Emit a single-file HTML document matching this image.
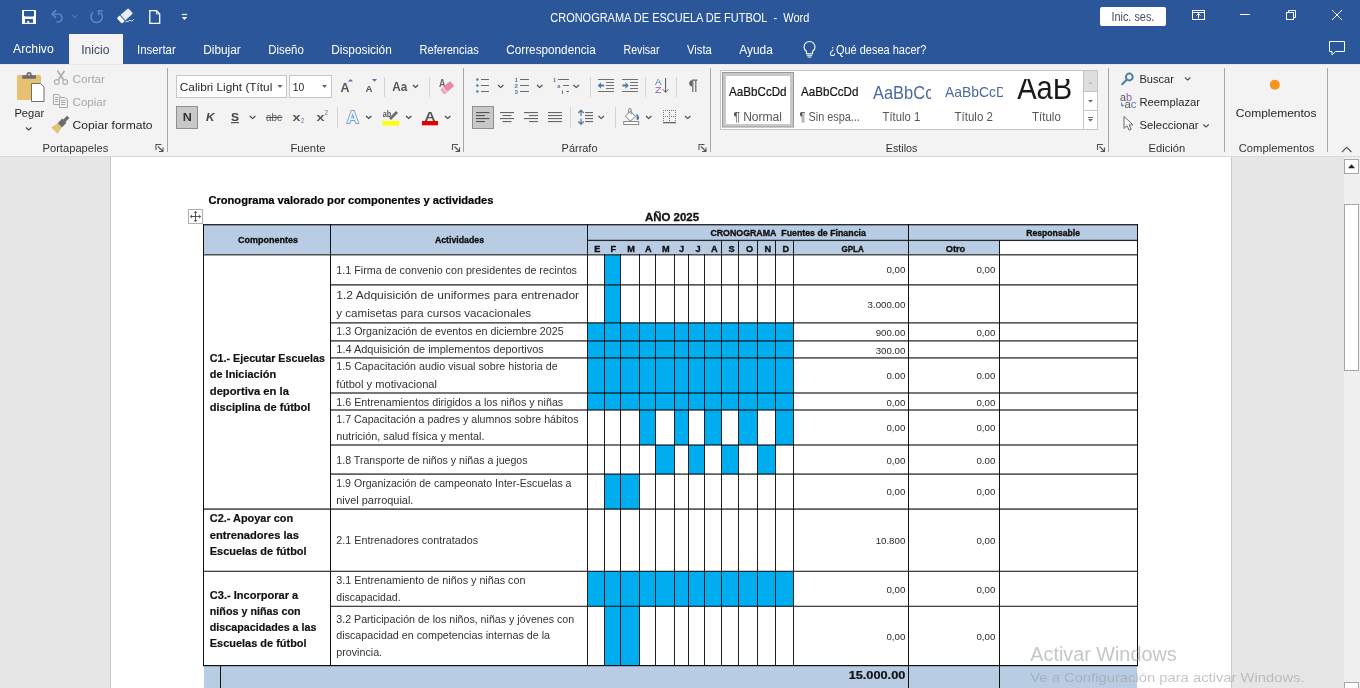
<!DOCTYPE html>
<html><head><meta charset="utf-8"><title>Word</title>
<style>html,body{margin:0;padding:0;width:1360px;height:688px;overflow:hidden;background:#e6e6e6}
svg{display:block;font-family:"Liberation Sans",sans-serif;will-change:transform}</style></head>
<body><svg width="1360" height="688" viewBox="0 0 1360 688">
<rect x="0" y="0" width="1360" height="64" fill="#2b579a" />
<rect x="69" y="34" width="54" height="30" fill="#f3f3f3" />
<rect x="0" y="64" width="1360" height="92" fill="#f3f3f3" />
<text x="550.3" y="22" font-size="12" fill="#fff" textLength="259" lengthAdjust="spacingAndGlyphs">CRONOGRAMA DE ESCUELA DE FUTBOL  -  Word</text>
<text x="13" y="53.0" font-size="12" fill="#fff" textLength="40.75" lengthAdjust="spacingAndGlyphs">Archivo</text>
<text x="137" y="54.0" font-size="12" fill="#fff" textLength="38.75" lengthAdjust="spacingAndGlyphs">Insertar</text>
<text x="203.25" y="54.0" font-size="12" fill="#fff" textLength="37.5" lengthAdjust="spacingAndGlyphs">Dibujar</text>
<text x="268.25" y="54.0" font-size="12" fill="#fff" textLength="35.5" lengthAdjust="spacingAndGlyphs">Diseño</text>
<text x="331.25" y="54.0" font-size="12" fill="#fff" textLength="60.5" lengthAdjust="spacingAndGlyphs">Disposición</text>
<text x="419.5" y="54.0" font-size="12" fill="#fff" textLength="59.25" lengthAdjust="spacingAndGlyphs">Referencias</text>
<text x="506.25" y="54.0" font-size="12" fill="#fff" textLength="89.5" lengthAdjust="spacingAndGlyphs">Correspondencia</text>
<text x="623.5" y="54.0" font-size="12" fill="#fff" textLength="36.0" lengthAdjust="spacingAndGlyphs">Revisar</text>
<text x="687" y="54.0" font-size="12" fill="#fff" textLength="24.75" lengthAdjust="spacingAndGlyphs">Vista</text>
<text x="739.25" y="54.0" font-size="12" fill="#fff" textLength="33.5" lengthAdjust="spacingAndGlyphs">Ayuda</text>
<text x="829.25" y="54.0" font-size="12" fill="#fff" textLength="97.0" lengthAdjust="spacingAndGlyphs">¿Qué desea hacer?</text>
<text x="81.25" y="54.3" font-size="12" fill="#3d4a5c" textLength="28.25" lengthAdjust="spacingAndGlyphs">Inicio</text>
<g fill="none" stroke="#fff" stroke-width="1.1"><path d="M804 47a5.5 5.5 0 0 1 11 0c0 2-1 3.3-2.5 4.5v2.3h-6v-2.3c-1.5-1.2-2.5-2.5-2.5-4.5z"/><path d="M806.8 55.3h5.4M807.5 57h4"/></g>
<rect x="1100" y="7" width="66" height="19" rx="2" fill="#fff"/>
<text x="1111.4" y="21.4" font-size="12" fill="#3f4e63" textLength="43" lengthAdjust="spacingAndGlyphs">Inic. ses.</text>
<rect x="22" y="10" width="14" height="14" rx="0.5" fill="#fff"/>
<path d="M24 11h10v4.6l-1 1h-8l-1-1z" fill="#2b579a"/>
<rect x="25" y="19" width="8" height="3.8" fill="#2b579a"/><rect x="27.2" y="21" width="2" height="1.8" fill="#fff"/>
<g fill="none" stroke="#5f84c0" stroke-width="1.7"><path d="M52 14h6a4 4 0 0 1 0 8h-1.5"/><path d="M56 10.2l-3.9 3.8 3.9 3.8"/></g>
<path d="M72 15l2.8 2.5 2.8-2.5" fill="none" stroke="#5f84c0" stroke-width="1"/>
<g fill="none" stroke="#5f84c0" stroke-width="1.6"><path d="M93.2 12.2A5.7 5.7 0 1 0 100.6 12.6"/><path d="M98.6 15.2v-4.4h4.4"/></g>
<g transform="translate(125,15.8) rotate(-42)"><rect x="-7.5" y="-3.6" width="15" height="7.2" rx="1.2" fill="#e8ecf6"/><rect x="-7.5" y="-3.6" width="4" height="7.2" rx="1" fill="#fff"/><rect x="-3.7" y="-3.6" width="0.9" height="7.2" fill="#2b579a"/></g>
<path d="M125.5 22c1.3-1.2 2.2-0.2 3-0.8s1.6-1.5 2.4-0.5 1.5-0.2 2.8-1.2" fill="none" stroke="#fff" stroke-width="1"/>
<path d="M149.8 10.7h6.6l3.3 3.3v9.3h-9.9z" fill="none" stroke="#fff" stroke-width="1.3"/><path d="M156.4 10.7v3.3h3.3" fill="none" stroke="#fff" stroke-width="0.8"/>
<rect x="181.9" y="13.9" width="5.2" height="1.2" fill="#fff"/><path d="M181.9 16.9h5.2l-2.6 3.2z" fill="#fff"/>
<g fill="none" stroke="#fff" stroke-width="1">
<rect x="1192.5" y="10.5" width="12" height="9"/><path d="M1192.5 12.5h12"/><path d="M1198.5 18.5v-5M1196.5 15.5l2-2 2 2"/>
<path d="M1240 14.5h10"/>
<rect x="1286.5" y="12.5" width="7" height="7"/><path d="M1288.5 12.5v-2h7v7h-2"/>
<path d="M1332 10l10 10M1342 10l-10 10"/>
<path d="M1329.5 41.5h15v10h-9l-3.5 3.5v-3.5h-2.5z"/>
</g>
<rect x="167" y="68" width="1" height="84" fill="#a6a6a6" />
<rect x="463" y="68" width="1" height="84" fill="#a6a6a6" />
<rect x="710" y="68" width="1" height="84" fill="#a6a6a6" />
<rect x="1108" y="68" width="1" height="84" fill="#a6a6a6" />
<rect x="1224" y="68" width="1" height="84" fill="#a6a6a6" />
<rect x="1327" y="68" width="1" height="84" fill="#a6a6a6" />
<rect x="0" y="64" width="1360" height="1" fill="#e1e8f2" />
<text x="42.5" y="151.5" font-size="11.5" fill="#333" textLength="65.8" lengthAdjust="spacingAndGlyphs">Portapapeles</text>
<text x="290.4" y="151.5" font-size="11.5" fill="#333" textLength="35.2" lengthAdjust="spacingAndGlyphs">Fuente</text>
<text x="561.6" y="151.5" font-size="11.5" fill="#333" textLength="35.9" lengthAdjust="spacingAndGlyphs">Párrafo</text>
<text x="885.8" y="151.5" font-size="11.5" fill="#333" textLength="31.6" lengthAdjust="spacingAndGlyphs">Estilos</text>
<text x="1148.5" y="151.5" font-size="11.5" fill="#333" textLength="36.7" lengthAdjust="spacingAndGlyphs">Edición</text>
<text x="1238.7" y="151.5" font-size="11.5" fill="#333" textLength="75.6" lengthAdjust="spacingAndGlyphs">Complementos</text>
<g fill="none" stroke="#555" stroke-width="1.1"><path d="M156.0 150v-5.5h5.5"/><path d="M158.0 146.5l5 5M163.0 147.5v4h-4"/></g>
<g fill="none" stroke="#555" stroke-width="1.1"><path d="M452.5 150v-5.5h5.5"/><path d="M454.5 146.5l5 5M459.5 147.5v4h-4"/></g>
<g fill="none" stroke="#555" stroke-width="1.1"><path d="M699.0 150v-5.5h5.5"/><path d="M701.0 146.5l5 5M706.0 147.5v4h-4"/></g>
<g fill="none" stroke="#555" stroke-width="1.1"><path d="M1097.5 150v-5.5h5.5"/><path d="M1099.5 146.5l5 5M1104.5 147.5v4h-4"/></g>
<rect x="17" y="75" width="24" height="25" rx="1.5" fill="#e8c071"/>
<rect x="22.2" y="75.2" width="13.8" height="3.6" rx="0.8" fill="#6d6d6d"/><circle cx="29.1" cy="74.6" r="2.6" fill="#6d6d6d"/><circle cx="29.1" cy="74.6" r="0.9" fill="#f3f3f3"/>
<path d="M31.5 83.5h9l3.5 3.5v14.5h-12.5z" fill="#fff" stroke="#6d6d6d" stroke-width="1"/>
<text x="14.4" y="117.1" font-size="11.5" fill="#262626" textLength="29.7" lengthAdjust="spacingAndGlyphs">Pegar</text>
<path d="M26 127.5l2.7 2.5 2.7-2.5" fill="none" stroke="#444" stroke-width="1.1"/>
<g fill="none" stroke="#b0b0b0" stroke-width="1.2"><circle cx="56.8" cy="82" r="2.4"/><circle cx="65.2" cy="82" r="2.4"/></g><g stroke="#b0b0b0" stroke-width="1.7"><path d="M58.3 80l6.2-9.3M63.7 80l-6.2-9.3"/></g>
<text x="72.6" y="82.7" font-size="11.5" fill="#a8a8a8" textLength="32.4" lengthAdjust="spacingAndGlyphs">Cortar</text>
<g fill="none" stroke="#a8a8a8" stroke-width="1"><path d="M53.5 94.5h5l1.5 1.5v8.5h-6.5z"/><path d="M55 97.5h3M55 99.5h3M55 101.5h3"/><path d="M59.5 97.5h5.5l2.5 2.5v7.5h-8z" fill="#f3f3f3"/><path d="M61 100.5h4.5M61 102.5h4.5M61 104.5h4.5"/></g>
<text x="72.6" y="105.5" font-size="11.5" fill="#a8a8a8" textLength="34" lengthAdjust="spacingAndGlyphs">Copiar</text>
<g transform="translate(61.5,123.5) rotate(-45)"><rect x="3.5" y="-1.6" width="6" height="3.2" fill="#6d6d6d"/><rect x="-2.5" y="-3" width="6.5" height="6" fill="#6d6d6d"/><path d="M-2.5 -3L-10 -4.5V4.5L-2.5 3z" fill="#e8c071"/></g>
<text x="72.6" y="128.8" font-size="11.5" fill="#262626" textLength="79.9" lengthAdjust="spacingAndGlyphs">Copiar formato</text>
<rect x="176.5" y="75.5" width="110" height="22" fill="#fff" stroke="#c6c6c6"/>
<text x="179.8" y="90.8" font-size="11.5" fill="#262626" textLength="92.5" lengthAdjust="spacingAndGlyphs">Calibri Light (Títul</text>
<path d="M277.5 85h5l-2.5 3z" fill="#666"/>
<rect x="289.5" y="75.5" width="42" height="22" fill="#fff" stroke="#c6c6c6"/>
<text x="292.7" y="90.8" font-size="11.5" fill="#262626" textLength="11.5" lengthAdjust="spacingAndGlyphs">10</text>
<path d="M322 85h5l-2.5 3z" fill="#666"/>
<text x="340.4" y="92" font-size="13" fill="#555" font-weight="bold" textLength="9" lengthAdjust="spacingAndGlyphs">A</text>
<path d="M348 81.5h5l-2.5 -2.5z" fill="#4a74b0"/>
<text x="365.4" y="92" font-size="9.5" fill="#555" font-weight="bold" textLength="7" lengthAdjust="spacingAndGlyphs">A</text>
<path d="M372 79h5l-2.5 2.7z" fill="#4a74b0"/>
<rect x="384" y="77" width="1" height="20" fill="#d4d4d4" />
<text x="392.2" y="90.5" font-size="12" fill="#555" font-weight="bold" textLength="15" lengthAdjust="spacingAndGlyphs">Aa</text>
<path d="M413 85l2.5 2.5 2.5-2.5" fill="none" stroke="#444" stroke-width="1.1"/>
<rect x="429" y="77" width="1" height="20" fill="#d4d4d4" />
<text x="439" y="87" font-size="10" fill="#666" font-weight="bold" textLength="6.5" lengthAdjust="spacingAndGlyphs">A</text>
<g transform="translate(447.3,87.8) rotate(-42)"><rect x="-6.5" y="-3.2" width="13" height="6.4" rx="1" fill="#e58aa0"/><rect x="-6.5" y="-3.2" width="3.5" height="6.4" rx="1" fill="#eea7b8"/><rect x="-3.4" y="-3.2" width="0.8" height="6.4" fill="#f3f3f3"/></g>
<rect x="176.5" y="106.5" width="21" height="22" fill="#c8c8c8" stroke="#8f8f8f"/>
<text x="182.7" y="121" font-size="11.5" fill="#333" font-weight="bold" textLength="9.1" lengthAdjust="spacingAndGlyphs">N</text>
<text x="206" y="121" font-size="11.5" fill="#444" font-weight="bold" font-style="italic" textLength="8.5" lengthAdjust="spacingAndGlyphs">K</text>
<text x="231" y="121" font-size="11.5" fill="#444" font-weight="bold" textLength="8" lengthAdjust="spacingAndGlyphs">S</text>
<rect x="231" y="122" width="8" height="1.2" fill="#555" />
<path d="M249.8 116l2.8 2.6 2.8-2.6" fill="none" stroke="#444" stroke-width="1.1"/>
<text x="266" y="120.6" font-size="10.5" fill="#5a5a5a" textLength="16" lengthAdjust="spacingAndGlyphs">abc</text>
<rect x="266" y="117" width="16.5" height="1" fill="#5a5a5a" />
<text x="292.6" y="120.6" font-size="11" fill="#555" font-weight="bold" textLength="8" lengthAdjust="spacingAndGlyphs">x</text>
<text x="301" y="123.3" font-size="6.5" fill="#4f7ba8" textLength="3.2" lengthAdjust="spacingAndGlyphs">2</text>
<text x="316.5" y="120.6" font-size="11" fill="#555" font-weight="bold" textLength="8" lengthAdjust="spacingAndGlyphs">x</text>
<text x="324.5" y="115" font-size="6.5" fill="#4f7ba8" textLength="3.6" lengthAdjust="spacingAndGlyphs">2</text>
<rect x="337" y="107" width="1" height="21" fill="#d4d4d4" />
<text x="346.7" y="122.8" font-size="16" font-weight="bold" fill="#e6f0fb" stroke="#5b8ac5" stroke-width="1.3" paint-order="stroke" textLength="12" lengthAdjust="spacingAndGlyphs">A</text>
<path d="M366 116l2.7 2.5 2.7-2.5" fill="none" stroke="#444" stroke-width="1.1"/>
<text x="382.8" y="116.5" font-size="8.5" fill="#555" font-weight="bold" textLength="8.5" lengthAdjust="spacingAndGlyphs">ab</text>
<path d="M389 118l7-7 2 2-7 7z" fill="#6d6d6d"/>
<rect x="382.5" y="121" width="16.5" height="4.5" fill="#ffff00" />
<path d="M406 116l2.7 2.5 2.7-2.5" fill="none" stroke="#444" stroke-width="1.1"/>
<text x="424.5" y="121" font-size="13.5" fill="#555" font-weight="bold" textLength="11" lengthAdjust="spacingAndGlyphs">A</text>
<rect x="422" y="121" width="16" height="4.3" fill="#e00000" />
<path d="M445 116l2.7 2.5 2.7-2.5" fill="none" stroke="#444" stroke-width="1.1"/>
<circle cx="477.4" cy="79.5" r="1.3" fill="#5a7ca0"/>
<rect x="481" y="79.0" width="8" height="1" fill="#6a6a6a" />
<circle cx="477.4" cy="85.5" r="1.3" fill="#5a7ca0"/>
<rect x="481" y="85.0" width="8" height="1" fill="#6a6a6a" />
<circle cx="477.4" cy="91.5" r="1.3" fill="#5a7ca0"/>
<rect x="481" y="91.0" width="8" height="1" fill="#6a6a6a" />
<path d="M498 85l2.7 2.6 2.7-2.6" fill="none" stroke="#444" stroke-width="1.1"/>
<text x="514.6" y="81.8" font-size="6" fill="#5a7ca0" font-weight="bold" textLength="3.5" lengthAdjust="spacingAndGlyphs">1</text>
<rect x="520" y="79.0" width="9" height="1" fill="#6a6a6a" />
<text x="514.6" y="87.8" font-size="6" fill="#5a7ca0" font-weight="bold" textLength="3.5" lengthAdjust="spacingAndGlyphs">2</text>
<rect x="520" y="85.0" width="9" height="1" fill="#6a6a6a" />
<text x="514.6" y="93.8" font-size="6" fill="#5a7ca0" font-weight="bold" textLength="3.5" lengthAdjust="spacingAndGlyphs">3</text>
<rect x="520" y="91.0" width="9" height="1" fill="#6a6a6a" />
<path d="M537 85l2.7 2.6 2.7-2.6" fill="none" stroke="#444" stroke-width="1.1"/>
<text x="553" y="81.8" font-size="6" fill="#5a7ca0" font-weight="bold" textLength="3.2" lengthAdjust="spacingAndGlyphs">1</text>
<rect x="558" y="79" width="11" height="1" fill="#6a6a6a" />
<text x="557.3" y="87.8" font-size="6" fill="#5a7ca0" font-weight="bold" textLength="3.2" lengthAdjust="spacingAndGlyphs">a</text>
<rect x="563" y="85" width="6" height="1" fill="#6a6a6a" />
<text x="561.6" y="93.8" font-size="6" fill="#5a7ca0" font-weight="bold" textLength="2" lengthAdjust="spacingAndGlyphs">i</text>
<rect x="566.5" y="91" width="2.5" height="1" fill="#6a6a6a" />
<path d="M573.5 85l2.7 2.6 2.7-2.6" fill="none" stroke="#444" stroke-width="1.1"/>
<rect x="590" y="77" width="1" height="20" fill="#d4d4d4" />
<rect x="598" y="79" width="16" height="1" fill="#707070" />
<rect x="598" y="91" width="16" height="1" fill="#707070" />
<rect x="606" y="82" width="8" height="1" fill="#707070" />
<rect x="606" y="85" width="8" height="1" fill="#707070" />
<rect x="606" y="88" width="8" height="1" fill="#707070" />
<path d="M597.7 85.5l3.3-3.2v2.2h3.2v2h-3.2v2.2z" fill="#4f7ba8"/>
<rect x="622" y="79" width="16" height="1" fill="#707070" />
<rect x="622" y="91" width="16" height="1" fill="#707070" />
<rect x="630" y="82" width="8" height="1" fill="#707070" />
<rect x="630" y="85" width="8" height="1" fill="#707070" />
<rect x="630" y="88" width="8" height="1" fill="#707070" />
<path d="M628.8 85.5l-3.3-3.2v2.2h-3.2v2h3.2v2.2z" fill="#4f7ba8"/>
<rect x="645" y="77" width="1" height="20" fill="#d4d4d4" />
<text x="655" y="84.6" font-size="8.5" fill="#4f7ba8" textLength="6.5" lengthAdjust="spacingAndGlyphs">A</text>
<text x="655" y="92.6" font-size="8.5" fill="#9a5bb0" textLength="6.5" lengthAdjust="spacingAndGlyphs">Z</text>
<path d="M665.6 78v14.3M662.8 89.3l2.8 3 2.8-3" fill="none" stroke="#555" stroke-width="1"/>
<rect x="676" y="77" width="1" height="20" fill="#d4d4d4" />
<path d="M692.3 80.2h5M692.8 80.2v11.7M695.8 80.2v11.7" fill="none" stroke="#666" stroke-width="1.2"/><path d="M692.3 80.2a3 3 0 0 0 0 6.2z" fill="#666"/>
<rect x="472.5" y="106.5" width="21" height="22" fill="#c8c8c8" stroke="#8f8f8f"/>
<rect x="476" y="112" width="13.5" height="1.1" fill="#555" />
<rect x="476" y="115" width="9" height="1.1" fill="#555" />
<rect x="476" y="118" width="13.5" height="1.1" fill="#555" />
<rect x="476" y="121" width="9" height="1.1" fill="#555" />
<rect x="500.0" y="112" width="14" height="1.1" fill="#666" />
<rect x="502.5" y="115" width="9" height="1.1" fill="#666" />
<rect x="500.0" y="118" width="14" height="1.1" fill="#666" />
<rect x="502.5" y="121" width="9" height="1.1" fill="#666" />
<rect x="524" y="112" width="14" height="1.1" fill="#666" />
<rect x="529" y="115" width="9" height="1.1" fill="#666" />
<rect x="524" y="118" width="14" height="1.1" fill="#666" />
<rect x="529" y="121" width="9" height="1.1" fill="#666" />
<rect x="548" y="112" width="14" height="1.1" fill="#666" />
<rect x="548" y="115" width="14" height="1.1" fill="#666" />
<rect x="548" y="118" width="14" height="1.1" fill="#666" />
<rect x="548" y="121" width="14" height="1.1" fill="#666" />
<rect x="570" y="107" width="1" height="21" fill="#d4d4d4" />
<path d="M581 110.5v5.5M581 118.5v5.5M578.3 113l2.7-2.8 2.7 2.8M578.3 121.5l2.7 2.8 2.7-2.8" fill="none" stroke="#5a7ca0" stroke-width="1.3"/>
<rect x="585" y="112" width="8" height="1.1" fill="#666" />
<rect x="585" y="115" width="8" height="1.1" fill="#666" />
<rect x="585" y="118" width="8" height="1.1" fill="#666" />
<rect x="585" y="121" width="8" height="1.1" fill="#666" />
<path d="M598.5 116l2.7 2.6 2.7-2.6" fill="none" stroke="#444" stroke-width="1.1"/>
<rect x="615" y="107" width="1" height="21" fill="#d4d4d4" />
<path d="M630.4 111.2l5 5-5 5-5-5z" fill="#fff" stroke="#777" stroke-width="1"/>
<path d="M628.7 113v-3.3a1.2 1.2 0 0 1 2.4 0v5" fill="none" stroke="#777" stroke-width="0.9"/>
<path d="M636.5 113.6c1.5 1.2 2.5 2.8 2.5 4.3s-1 2-1.5 2-1-0.8-1-2z" fill="#4a74b0"/>
<rect x="623.7" y="121.5" width="15" height="3" fill="#fff" stroke="#8a8a8a" stroke-width="1"/>
<path d="M646 116l2.7 2.6 2.7-2.6" fill="none" stroke="#444" stroke-width="1.1"/>
<g fill="#777"><rect x="663" y="110" width="1" height="1"/><rect x="663" y="112" width="1" height="1"/><rect x="663" y="114" width="1" height="1"/><rect x="663" y="116" width="1" height="1"/><rect x="663" y="118" width="1" height="1"/><rect x="663" y="120" width="1" height="1"/><rect x="663" y="122" width="1" height="1"/><rect x="665" y="110" width="1" height="1"/><rect x="665" y="116" width="1" height="1"/><rect x="667" y="110" width="1" height="1"/><rect x="667" y="116" width="1" height="1"/><rect x="669" y="110" width="1" height="1"/><rect x="669" y="112" width="1" height="1"/><rect x="669" y="114" width="1" height="1"/><rect x="669" y="116" width="1" height="1"/><rect x="669" y="118" width="1" height="1"/><rect x="669" y="120" width="1" height="1"/><rect x="669" y="122" width="1" height="1"/><rect x="671" y="110" width="1" height="1"/><rect x="671" y="116" width="1" height="1"/><rect x="673" y="110" width="1" height="1"/><rect x="673" y="116" width="1" height="1"/><rect x="675" y="110" width="1" height="1"/><rect x="675" y="112" width="1" height="1"/><rect x="675" y="114" width="1" height="1"/><rect x="675" y="116" width="1" height="1"/><rect x="675" y="118" width="1" height="1"/><rect x="675" y="120" width="1" height="1"/><rect x="675" y="122" width="1" height="1"/></g>
<rect x="663" y="122" width="13" height="1.3" fill="#666" />
<path d="M685 116l2.7 2.6 2.7-2.6" fill="none" stroke="#444" stroke-width="1.1"/>
<rect x="720.5" y="70.5" width="377" height="59" fill="#fff" stroke="#c6c6c6"/>
<rect x="722" y="72" width="72" height="55.5" fill="#9a9a9a" />
<rect x="723" y="73" width="70" height="53.5" fill="#c8c8c8" />
<rect x="726" y="76" width="64" height="48" fill="#fff" />
<text x="729" y="95.6" font-size="12.5" fill="#111" stroke="#111" stroke-width="0.2" textLength="57.6" lengthAdjust="spacingAndGlyphs">AaBbCcDd</text>
<text x="733.4" y="120.6" font-size="12" fill="#555" textLength="48.5" lengthAdjust="spacingAndGlyphs">¶ Normal</text>
<text x="801" y="95.6" font-size="12.5" fill="#111" stroke="#111" stroke-width="0.2" textLength="57.4" lengthAdjust="spacingAndGlyphs">AaBbCcDd</text>
<text x="799.6" y="120.6" font-size="12" fill="#555" textLength="60.3" lengthAdjust="spacingAndGlyphs">¶ Sin espa...</text>
<clipPath id="c1"><rect x="870" y="75" width="61" height="30"/></clipPath><clipPath id="c2"><rect x="940" y="75" width="63" height="30"/></clipPath>
<g clip-path="url(#c1)">
<text x="873" y="99" font-size="17.5" fill="#4a6a9e" textLength="81.4" lengthAdjust="spacingAndGlyphs">AaBbCcDd</text>
</g>
<text x="882.6" y="121" font-size="12" fill="#555" textLength="37.6" lengthAdjust="spacingAndGlyphs">Título 1</text>
<g clip-path="url(#c2)">
<text x="945" y="97" font-size="14.5" fill="#4a6a9e" textLength="68.8" lengthAdjust="spacingAndGlyphs">AaBbCcDd</text>
</g>
<text x="954.6" y="121" font-size="12" fill="#555" textLength="38.3" lengthAdjust="spacingAndGlyphs">Título 2</text>
<clipPath id="cg"><rect x="721" y="79" width="362" height="50"/></clipPath>
<g clip-path="url(#cg)">
<text x="1017.2" y="98.8" font-size="33" fill="#1a1a1a" textLength="55" lengthAdjust="spacingAndGlyphs">AaB</text>
</g>
<rect x="1083" y="71" width="1" height="58" fill="#dadada" />
<text x="1032" y="121" font-size="12" fill="#555" textLength="28.8" lengthAdjust="spacingAndGlyphs">Título</text>
<rect x="1083.5" y="70.5" width="14" height="21" fill="#dedede" stroke="#c6c6c6"/>
<path d="M1088 84h5l-2.5-2.5z" fill="#c0c0c0"/>
<rect x="1083.5" y="91.5" width="14" height="19" fill="#fff" stroke="#c6c6c6"/>
<path d="M1088 100h5l-2.5 2.5z" fill="#666"/>
<rect x="1083.5" y="110.5" width="14" height="19" fill="#fff" stroke="#c6c6c6"/>
<rect x="1088" y="117" width="5" height="1" fill="#666" />
<path d="M1088 119h5l-2.5 2.5z" fill="#666"/>
<g fill="none" stroke="#4f7ba8" stroke-width="2"><circle cx="1129.3" cy="77" r="3.4"/><path d="M1126.7 79.7l-4.5 4.5" stroke-linecap="round"/></g>
<text x="1139.5" y="82.7" font-size="11.5" fill="#262626" textLength="34.4" lengthAdjust="spacingAndGlyphs">Buscar</text>
<path d="M1185 77.5l2.7 2.6 2.7-2.6" fill="none" stroke="#444" stroke-width="1.1"/>
<text x="1120" y="101.3" font-size="10.5" textLength="12" lengthAdjust="spacingAndGlyphs"><tspan fill="#555">a</tspan><tspan fill="#9a5bb0">b</tspan></text>
<text x="1124.5" y="107.8" font-size="10.5" textLength="12" lengthAdjust="spacingAndGlyphs"><tspan fill="#555">a</tspan><tspan fill="#4a7ab8">c</tspan></text>
<path d="M1121.5 102.5v3h2M1122.5 104.5l1.2 1-1.2 1" fill="none" stroke="#4a7ab8" stroke-width="0.9"/>
<text x="1139.5" y="105.7" font-size="11.5" fill="#262626" textLength="60.5" lengthAdjust="spacingAndGlyphs">Reemplazar</text>
<path d="M1124 116.5v12l3-2.8 2.2 4.5 2-1-2.2-4.3h4z" fill="#fff" stroke="#666" stroke-width="1"/>
<text x="1139.5" y="128.8" font-size="11.5" fill="#262626" textLength="59.1" lengthAdjust="spacingAndGlyphs">Seleccionar</text>
<path d="M1203.3 124.5l2.7 2.6 2.7-2.6" fill="none" stroke="#444" stroke-width="1.1"/>
<circle cx="1274.8" cy="84.7" r="5" fill="#f7931e"/>
<text x="1235.8" y="116.8" font-size="11.5" fill="#262626" textLength="80.7" lengthAdjust="spacingAndGlyphs">Complementos</text>
<path d="M1342 152l4.7-4.7 4.7 4.7" fill="none" stroke="#555" stroke-width="1.1"/>
<rect x="0" y="156" width="1344" height="532" fill="#e6e6e6" />
<rect x="110" y="156" width="1" height="532" fill="#c8c8c8" />
<rect x="111" y="156" width="1120" height="532" fill="#fff" />
<rect x="1231" y="156" width="1" height="532" fill="#c8c8c8" />
<rect x="1344" y="156" width="16" height="532" fill="#f0f0f0" />
<rect x="0" y="156" width="1360" height="1" fill="#d9d9d9" />
<rect x="1344.5" y="159.5" width="14" height="14" fill="#fff" stroke="#a6a6a6"/>
<path d="M1348 168.3h7l-3.5-4z" fill="#222"/>
<rect x="1344.5" y="204.5" width="14" height="166" fill="#fff" stroke="#a6a6a6"/>
<rect x="1344.5" y="682.5" width="14" height="10" fill="#fff" stroke="#a6a6a6"/>
<text x="208.4" y="204.3" font-size="11.5" fill="#000" stroke="#000" stroke-width="0.2" font-weight="bold" textLength="285" lengthAdjust="spacingAndGlyphs">Cronograma valorado por componentes y actividades</text>
<text x="644.9" y="221" font-size="11.5" fill="#111" stroke="#111" stroke-width="0.3" font-weight="bold" textLength="54.2" lengthAdjust="spacingAndGlyphs">AÑO 2025</text>
<rect x="188.5" y="209.5" width="14" height="14" fill="#fff" stroke="#b0b0b0"/>
<path d="M195.5 211.5v10M190.5 216.5h10" stroke="#555" stroke-width="1"/><path d="M194 213l1.5-1.7 1.5 1.7M194 220l1.5 1.7 1.5-1.7M192 215l-1.7 1.5 1.7 1.5M199 215l1.7 1.5-1.7 1.5" fill="none" stroke="#555" stroke-width="0.9"/>
<rect x="204" y="225" width="933" height="29" fill="#b8cce4" />
<rect x="1000" y="241" width="137" height="13" fill="#fff" />
<rect x="204" y="665.6" width="933" height="23" fill="#b8cce4" />
<rect x="605" y="254.8" width="15" height="30.04" fill="#00aeef" />
<rect x="605" y="284.84" width="15" height="38.01" fill="#00aeef" />
<rect x="588" y="322.85" width="16" height="18.02" fill="#00aeef" />
<rect x="605" y="322.85" width="15" height="18.02" fill="#00aeef" />
<rect x="621" y="322.85" width="18" height="18.02" fill="#00aeef" />
<rect x="640" y="322.85" width="15" height="18.02" fill="#00aeef" />
<rect x="656" y="322.85" width="18" height="18.02" fill="#00aeef" />
<rect x="675" y="322.85" width="13" height="18.02" fill="#00aeef" />
<rect x="689" y="322.85" width="15" height="18.02" fill="#00aeef" />
<rect x="705" y="322.85" width="16" height="18.02" fill="#00aeef" />
<rect x="722" y="322.85" width="16" height="18.02" fill="#00aeef" />
<rect x="739" y="322.85" width="18" height="18.02" fill="#00aeef" />
<rect x="758" y="322.85" width="17" height="18.02" fill="#00aeef" />
<rect x="776" y="322.85" width="17" height="18.02" fill="#00aeef" />
<rect x="588" y="340.87" width="16" height="17.03" fill="#00aeef" />
<rect x="605" y="340.87" width="15" height="17.03" fill="#00aeef" />
<rect x="621" y="340.87" width="18" height="17.03" fill="#00aeef" />
<rect x="640" y="340.87" width="15" height="17.03" fill="#00aeef" />
<rect x="656" y="340.87" width="18" height="17.03" fill="#00aeef" />
<rect x="675" y="340.87" width="13" height="17.03" fill="#00aeef" />
<rect x="689" y="340.87" width="15" height="17.03" fill="#00aeef" />
<rect x="705" y="340.87" width="16" height="17.03" fill="#00aeef" />
<rect x="722" y="340.87" width="16" height="17.03" fill="#00aeef" />
<rect x="739" y="340.87" width="18" height="17.03" fill="#00aeef" />
<rect x="758" y="340.87" width="17" height="17.03" fill="#00aeef" />
<rect x="776" y="340.87" width="17" height="17.03" fill="#00aeef" />
<rect x="588" y="357.9" width="16" height="35.1" fill="#00aeef" />
<rect x="605" y="357.9" width="15" height="35.1" fill="#00aeef" />
<rect x="621" y="357.9" width="18" height="35.1" fill="#00aeef" />
<rect x="640" y="357.9" width="15" height="35.1" fill="#00aeef" />
<rect x="656" y="357.9" width="18" height="35.1" fill="#00aeef" />
<rect x="675" y="357.9" width="13" height="35.1" fill="#00aeef" />
<rect x="689" y="357.9" width="15" height="35.1" fill="#00aeef" />
<rect x="705" y="357.9" width="16" height="35.1" fill="#00aeef" />
<rect x="722" y="357.9" width="16" height="35.1" fill="#00aeef" />
<rect x="739" y="357.9" width="18" height="35.1" fill="#00aeef" />
<rect x="758" y="357.9" width="17" height="35.1" fill="#00aeef" />
<rect x="776" y="357.9" width="17" height="35.1" fill="#00aeef" />
<rect x="588" y="393.0" width="16" height="17.0" fill="#00aeef" />
<rect x="605" y="393.0" width="15" height="17.0" fill="#00aeef" />
<rect x="621" y="393.0" width="18" height="17.0" fill="#00aeef" />
<rect x="640" y="393.0" width="15" height="17.0" fill="#00aeef" />
<rect x="656" y="393.0" width="18" height="17.0" fill="#00aeef" />
<rect x="675" y="393.0" width="13" height="17.0" fill="#00aeef" />
<rect x="689" y="393.0" width="15" height="17.0" fill="#00aeef" />
<rect x="705" y="393.0" width="16" height="17.0" fill="#00aeef" />
<rect x="722" y="393.0" width="16" height="17.0" fill="#00aeef" />
<rect x="739" y="393.0" width="18" height="17.0" fill="#00aeef" />
<rect x="758" y="393.0" width="17" height="17.0" fill="#00aeef" />
<rect x="776" y="393.0" width="17" height="17.0" fill="#00aeef" />
<rect x="640" y="410.0" width="15" height="35.0" fill="#00aeef" />
<rect x="675" y="410.0" width="13" height="35.0" fill="#00aeef" />
<rect x="705" y="410.0" width="16" height="35.0" fill="#00aeef" />
<rect x="739" y="410.0" width="18" height="35.0" fill="#00aeef" />
<rect x="776" y="410.0" width="17" height="35.0" fill="#00aeef" />
<rect x="656" y="445.0" width="18" height="29.1" fill="#00aeef" />
<rect x="689" y="445.0" width="15" height="29.1" fill="#00aeef" />
<rect x="722" y="445.0" width="16" height="29.1" fill="#00aeef" />
<rect x="758" y="445.0" width="17" height="29.1" fill="#00aeef" />
<rect x="605" y="474.1" width="15" height="35.0" fill="#00aeef" />
<rect x="621" y="474.1" width="18" height="35.0" fill="#00aeef" />
<rect x="588" y="571.3" width="16" height="35.0" fill="#00aeef" />
<rect x="605" y="571.3" width="15" height="35.0" fill="#00aeef" />
<rect x="621" y="571.3" width="18" height="35.0" fill="#00aeef" />
<rect x="640" y="571.3" width="15" height="35.0" fill="#00aeef" />
<rect x="656" y="571.3" width="18" height="35.0" fill="#00aeef" />
<rect x="675" y="571.3" width="13" height="35.0" fill="#00aeef" />
<rect x="689" y="571.3" width="15" height="35.0" fill="#00aeef" />
<rect x="705" y="571.3" width="16" height="35.0" fill="#00aeef" />
<rect x="722" y="571.3" width="16" height="35.0" fill="#00aeef" />
<rect x="739" y="571.3" width="18" height="35.0" fill="#00aeef" />
<rect x="758" y="571.3" width="17" height="35.0" fill="#00aeef" />
<rect x="776" y="571.3" width="17" height="35.0" fill="#00aeef" />
<rect x="605" y="606.3" width="15" height="59.3" fill="#00aeef" />
<rect x="621" y="606.3" width="18" height="59.3" fill="#00aeef" />
<rect x="203" y="224" width="1" height="442" fill="#111" />
<rect x="330" y="224" width="1" height="442" fill="#111" />
<rect x="908" y="224" width="1" height="442" fill="#111" />
<rect x="999" y="240" width="1" height="426" fill="#111" />
<rect x="1137" y="224" width="1" height="442" fill="#111" />
<rect x="203" y="224.05" width="935" height="1.3" fill="#000" fill-opacity="0.87"/>
<rect x="587" y="239.75" width="551" height="1.3" fill="#000" fill-opacity="0.8"/>
<rect x="203" y="254.15" width="935" height="1.3" fill="#000" fill-opacity="0.8"/>
<rect x="587" y="224" width="1" height="442" fill="#000" fill-opacity="0.88"/>
<rect x="604" y="254" width="1" height="412" fill="#000" fill-opacity="0.88"/>
<rect x="620" y="254" width="1" height="412" fill="#000" fill-opacity="0.88"/>
<rect x="639" y="254" width="1" height="412" fill="#000" fill-opacity="0.88"/>
<rect x="655" y="254" width="1" height="412" fill="#000" fill-opacity="0.88"/>
<rect x="674" y="254" width="1" height="412" fill="#000" fill-opacity="0.88"/>
<rect x="688" y="254" width="1" height="412" fill="#000" fill-opacity="0.88"/>
<rect x="704" y="254" width="1" height="412" fill="#000" fill-opacity="0.88"/>
<rect x="721" y="240" width="1" height="426" fill="#000" fill-opacity="0.88"/>
<rect x="738" y="240" width="1" height="426" fill="#000" fill-opacity="0.88"/>
<rect x="757" y="240" width="1" height="426" fill="#000" fill-opacity="0.88"/>
<rect x="775" y="240" width="1" height="426" fill="#000" fill-opacity="0.88"/>
<rect x="793" y="240" width="1" height="426" fill="#000" fill-opacity="0.88"/>
<rect x="330" y="284.09" width="808" height="1.5" fill="#000" fill-opacity="0.73"/>
<rect x="330" y="322.1" width="808" height="1.5" fill="#000" fill-opacity="0.71"/>
<rect x="330" y="340.12" width="808" height="1.5" fill="#000" fill-opacity="0.71"/>
<rect x="330" y="357.15" width="808" height="1.5" fill="#000" fill-opacity="0.71"/>
<rect x="330" y="392.25" width="808" height="1.5" fill="#000" fill-opacity="0.71"/>
<rect x="330" y="409.25" width="808" height="1.5" fill="#000" fill-opacity="0.71"/>
<rect x="330" y="444.25" width="808" height="1.5" fill="#000" fill-opacity="0.71"/>
<rect x="330" y="473.35" width="808" height="1.5" fill="#000" fill-opacity="0.73"/>
<rect x="330" y="605.75" width="808" height="1.1" fill="#000" fill-opacity="0.87"/>
<rect x="203" y="508.4" width="935" height="1.4" fill="#000" fill-opacity="0.8"/>
<rect x="203" y="570.75" width="935" height="1.1" fill="#000" fill-opacity="0.87"/>
<rect x="203" y="665.0" width="935" height="1.2" fill="#000" fill-opacity="0.93"/>
<rect x="220" y="666" width="1" height="22" fill="#111" />
<rect x="908" y="666" width="1" height="22" fill="#111" />
<rect x="999" y="666" width="1" height="22" fill="#111" />
<text x="237.9" y="243.1" font-size="9.6" fill="#111" stroke="#111" stroke-width="0.35" font-weight="bold" textLength="60" lengthAdjust="spacingAndGlyphs">Componentes</text>
<text x="434.9" y="243.1" font-size="9.6" fill="#111" stroke="#111" stroke-width="0.35" font-weight="bold" textLength="49.2" lengthAdjust="spacingAndGlyphs">Actividades</text>
<text x="710.4" y="236.3" font-size="9.2" fill="#111" stroke="#111" stroke-width="0.35" font-weight="bold" textLength="155.5" lengthAdjust="spacingAndGlyphs">CRONOGRAMA  Fuentes de Financia</text>
<text x="1026.2" y="236.3" font-size="9.2" fill="#111" stroke="#111" stroke-width="0.35" font-weight="bold" textLength="53.8" lengthAdjust="spacingAndGlyphs">Responsable</text>
<text x="841.4" y="252" font-size="9.2" fill="#111" stroke="#111" stroke-width="0.35" font-weight="bold" textLength="22.5" lengthAdjust="spacingAndGlyphs">GPLA</text>
<text x="945.7" y="252" font-size="9.2" fill="#111" stroke="#111" stroke-width="0.35" font-weight="bold" textLength="19.6" lengthAdjust="spacingAndGlyphs">Otro</text>
<text x="597.4" y="251.8" font-size="9.2" fill="#111" stroke="#111" stroke-width="0.35" font-weight="bold" text-anchor="middle">E</text>
<text x="613.2" y="251.8" font-size="9.2" fill="#111" stroke="#111" stroke-width="0.35" font-weight="bold" text-anchor="middle">F</text>
<text x="631" y="251.8" font-size="9.2" fill="#111" stroke="#111" stroke-width="0.35" font-weight="bold" text-anchor="middle">M</text>
<text x="648.4" y="251.8" font-size="9.2" fill="#111" stroke="#111" stroke-width="0.35" font-weight="bold" text-anchor="middle">A</text>
<text x="665.9" y="251.8" font-size="9.2" fill="#111" stroke="#111" stroke-width="0.35" font-weight="bold" text-anchor="middle">M</text>
<text x="681.5" y="251.8" font-size="9.2" fill="#111" stroke="#111" stroke-width="0.35" font-weight="bold" text-anchor="middle">J</text>
<text x="698.1" y="251.8" font-size="9.2" fill="#111" stroke="#111" stroke-width="0.35" font-weight="bold" text-anchor="middle">J</text>
<text x="714.4" y="251.8" font-size="9.2" fill="#111" stroke="#111" stroke-width="0.35" font-weight="bold" text-anchor="middle">A</text>
<text x="731.5" y="251.8" font-size="9.2" fill="#111" stroke="#111" stroke-width="0.35" font-weight="bold" text-anchor="middle">S</text>
<text x="749.5" y="251.8" font-size="9.2" fill="#111" stroke="#111" stroke-width="0.35" font-weight="bold" text-anchor="middle">O</text>
<text x="767.8" y="251.8" font-size="9.2" fill="#111" stroke="#111" stroke-width="0.35" font-weight="bold" text-anchor="middle">N</text>
<text x="785.9" y="251.8" font-size="9.2" fill="#111" stroke="#111" stroke-width="0.35" font-weight="bold" text-anchor="middle">D</text>
<text x="336.3" y="273.5" font-size="11" fill="#333" textLength="240.7" lengthAdjust="spacingAndGlyphs">1.1 Firma de convenio con presidentes de recintos</text>
<text x="336.3" y="298.6" font-size="11.6" fill="#333" textLength="242.8" lengthAdjust="spacingAndGlyphs">1.2 Adquisición de uniformes para entrenador</text>
<text x="336.3" y="317.1" font-size="11.6" fill="#333" textLength="194.8" lengthAdjust="spacingAndGlyphs">y camisetas para cursos vacacionales</text>
<text x="336.3" y="334.9" font-size="11" fill="#333" textLength="227.4" lengthAdjust="spacingAndGlyphs">1.3 Organización de eventos en diciembre 2025</text>
<text x="336.3" y="352.9" font-size="11" fill="#333" textLength="207.5" lengthAdjust="spacingAndGlyphs">1.4 Adquisición de implementos deportivos</text>
<text x="336.3" y="370.3" font-size="11" fill="#333" textLength="221.3" lengthAdjust="spacingAndGlyphs">1.5 Capacitación audio visual sobre historia de</text>
<text x="336.3" y="387.7" font-size="11" fill="#333" textLength="100.7" lengthAdjust="spacingAndGlyphs">fútbol y motivacional</text>
<text x="336.3" y="405.7" font-size="11" fill="#333" textLength="226.9" lengthAdjust="spacingAndGlyphs">1.6 Entrenamientos dirigidos a los niños y niñas</text>
<text x="336.3" y="422.6" font-size="11" fill="#333" textLength="242.2" lengthAdjust="spacingAndGlyphs">1.7 Capacitación a padres y alumnos sobre hábitos</text>
<text x="336.3" y="439.5" font-size="11" fill="#333" textLength="148.1" lengthAdjust="spacingAndGlyphs">nutrición, salud física y mental.</text>
<text x="336.3" y="463.6" font-size="11" fill="#333" textLength="191.3" lengthAdjust="spacingAndGlyphs">1.8 Transporte de niños y niñas a juegos</text>
<text x="336.3" y="486.8" font-size="11" fill="#333" textLength="235.2" lengthAdjust="spacingAndGlyphs">1.9 Organización de campeonato Inter-Escuelas a</text>
<text x="336.3" y="503.7" font-size="11" fill="#333" textLength="77.1" lengthAdjust="spacingAndGlyphs">nivel parroquial.</text>
<text x="336.3" y="543.6" font-size="11" fill="#333" textLength="141.8" lengthAdjust="spacingAndGlyphs">2.1 Entrenadores contratados</text>
<text x="336.3" y="583.9" font-size="11" fill="#333" textLength="189.2" lengthAdjust="spacingAndGlyphs">3.1 Entrenamiento de niños y niñas con</text>
<text x="336.3" y="600.5" font-size="11" fill="#333" textLength="64.3" lengthAdjust="spacingAndGlyphs">discapacidad.</text>
<text x="336.3" y="622.8" font-size="11" fill="#333" textLength="237.8" lengthAdjust="spacingAndGlyphs">3.2 Participación de los niños, niñas y jóvenes con</text>
<text x="336.3" y="639.4" font-size="11" fill="#333" textLength="213.7" lengthAdjust="spacingAndGlyphs">discapacidad en competencias internas de la</text>
<text x="336.3" y="656" font-size="11" fill="#333" textLength="45.8" lengthAdjust="spacingAndGlyphs">provincia.</text>
<text x="209.8" y="362.2" font-size="11.5" fill="#111" stroke="#111" stroke-width="0.2" font-weight="bold" textLength="115.1" lengthAdjust="spacingAndGlyphs">C1.- Ejecutar Escuelas</text>
<text x="209.8" y="377.7" font-size="11.5" fill="#111" stroke="#111" stroke-width="0.2" font-weight="bold" textLength="66.3" lengthAdjust="spacingAndGlyphs">de Iniciación</text>
<text x="209.8" y="395.4" font-size="11.5" fill="#111" stroke="#111" stroke-width="0.2" font-weight="bold" textLength="79.1" lengthAdjust="spacingAndGlyphs">deportiva en la</text>
<text x="209.8" y="411" font-size="11.5" fill="#111" stroke="#111" stroke-width="0.2" font-weight="bold" textLength="100.6" lengthAdjust="spacingAndGlyphs">disciplina de fútbol</text>
<text x="209.8" y="522.4" font-size="11.5" fill="#111" stroke="#111" stroke-width="0.2" font-weight="bold" textLength="83.3" lengthAdjust="spacingAndGlyphs">C2.- Apoyar con</text>
<text x="209.8" y="539" font-size="11.5" fill="#111" stroke="#111" stroke-width="0.2" font-weight="bold" textLength="89.1" lengthAdjust="spacingAndGlyphs">entrenadores las</text>
<text x="209.8" y="555.3" font-size="11.5" fill="#111" stroke="#111" stroke-width="0.2" font-weight="bold" textLength="96.8" lengthAdjust="spacingAndGlyphs">Escuelas de fútbol</text>
<text x="209.8" y="598.8" font-size="11.5" fill="#111" stroke="#111" stroke-width="0.2" font-weight="bold" textLength="88.4" lengthAdjust="spacingAndGlyphs">C3.- Incorporar a</text>
<text x="209.8" y="614.6" font-size="11.5" fill="#111" stroke="#111" stroke-width="0.2" font-weight="bold" textLength="90.8" lengthAdjust="spacingAndGlyphs">niños y niñas con</text>
<text x="209.8" y="630.9" font-size="11.5" fill="#111" stroke="#111" stroke-width="0.2" font-weight="bold" textLength="106.6" lengthAdjust="spacingAndGlyphs">discapacidades a las</text>
<text x="209.8" y="647.2" font-size="11.5" fill="#111" stroke="#111" stroke-width="0.2" font-weight="bold" textLength="96.8" lengthAdjust="spacingAndGlyphs">Escuelas de fútbol</text>
<text x="905.3" y="273.3" font-size="9.7" fill="#2a2a2a" text-anchor="end">0,00</text>
<text x="995.3" y="273.3" font-size="9.7" fill="#2a2a2a" text-anchor="end">0,00</text>
<text x="905.3" y="308.1" font-size="9.7" fill="#2a2a2a" text-anchor="end">3.000.00</text>
<text x="905.3" y="335.90000000000003" font-size="9.7" fill="#2a2a2a" text-anchor="end">900.00</text>
<text x="995.3" y="335.90000000000003" font-size="9.7" fill="#2a2a2a" text-anchor="end">0,00</text>
<text x="905.3" y="353.5" font-size="9.7" fill="#2a2a2a" text-anchor="end">300.00</text>
<text x="905.3" y="378.8" font-size="9.7" fill="#2a2a2a" text-anchor="end">0.00</text>
<text x="995.3" y="378.8" font-size="9.7" fill="#2a2a2a" text-anchor="end">0.00</text>
<text x="905.3" y="405.90000000000003" font-size="9.7" fill="#2a2a2a" text-anchor="end">0,00</text>
<text x="995.3" y="405.90000000000003" font-size="9.7" fill="#2a2a2a" text-anchor="end">0,00</text>
<text x="905.3" y="431.3" font-size="9.7" fill="#2a2a2a" text-anchor="end">0,00</text>
<text x="995.3" y="431.3" font-size="9.7" fill="#2a2a2a" text-anchor="end">0,00</text>
<text x="905.3" y="463.70000000000005" font-size="9.7" fill="#2a2a2a" text-anchor="end">0,00</text>
<text x="995.3" y="463.70000000000005" font-size="9.7" fill="#2a2a2a" text-anchor="end">0.00</text>
<text x="905.3" y="495.3" font-size="9.7" fill="#2a2a2a" text-anchor="end">0,00</text>
<text x="995.3" y="495.3" font-size="9.7" fill="#2a2a2a" text-anchor="end">0,00</text>
<text x="905.3" y="544.3000000000001" font-size="9.7" fill="#2a2a2a" text-anchor="end">10.800</text>
<text x="995.3" y="544.3000000000001" font-size="9.7" fill="#2a2a2a" text-anchor="end">0,00</text>
<text x="905.3" y="592.5" font-size="9.7" fill="#2a2a2a" text-anchor="end">0,00</text>
<text x="995.3" y="592.5" font-size="9.7" fill="#2a2a2a" text-anchor="end">0,00</text>
<text x="905.3" y="640.3000000000001" font-size="9.7" fill="#2a2a2a" text-anchor="end">0,00</text>
<text x="995.3" y="640.3000000000001" font-size="9.7" fill="#2a2a2a" text-anchor="end">0,00</text>
<text x="848.7" y="678.6" font-size="11" fill="#111" stroke="#111" stroke-width="0.2" font-weight="bold" textLength="56.6" lengthAdjust="spacingAndGlyphs">15.000.00</text>
<text x="1030.3" y="661.3" font-size="19.5" fill="#a0a0a0" opacity="0.6" textLength="146.3" lengthAdjust="spacingAndGlyphs">Activar Windows</text>
<text x="1030.3" y="682.3" font-size="13.5" fill="#a0a0a0" opacity="0.6" textLength="274.3" lengthAdjust="spacingAndGlyphs">Ve a Configuración para activar Windows.</text>
</svg></body></html>
